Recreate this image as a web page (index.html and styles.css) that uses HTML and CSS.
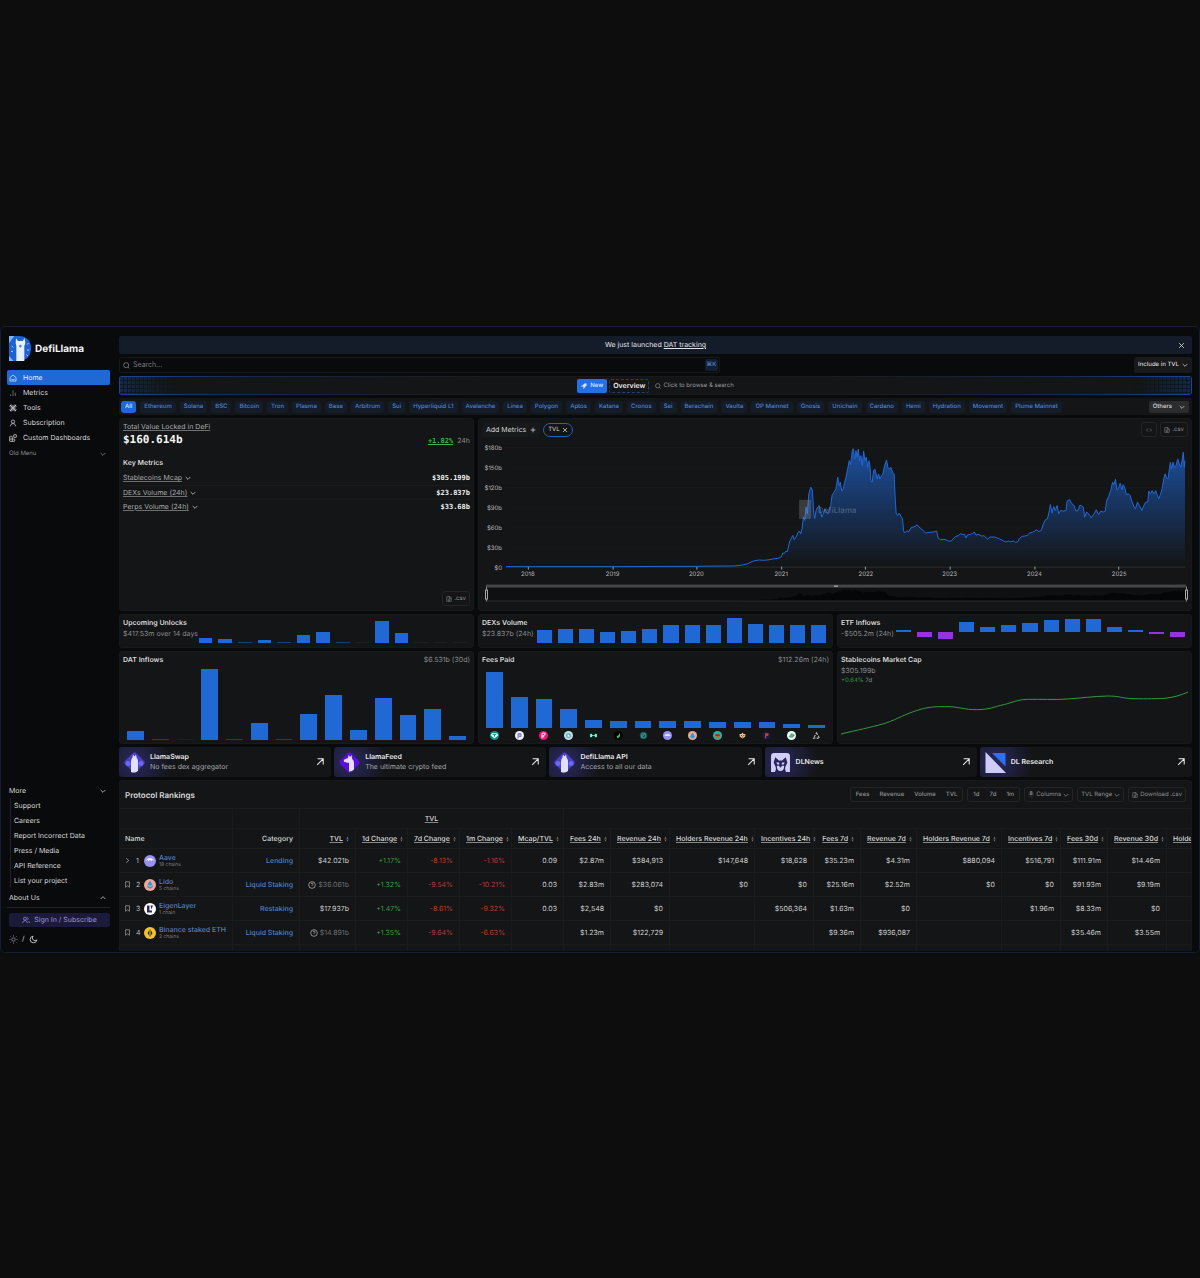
FILE: index.html
```html
<!DOCTYPE html>
<html lang="en">
<head>
<meta charset="utf-8">
<title>DefiLlama</title>
<meta name="viewport" content="width=device-width, initial-scale=1">
<link rel="stylesheet" href="styles.css">
</head>
<body>
<svg class="sprite" aria-hidden="true">
  <symbol id="chev-down" viewBox="3 3 18 18"><path d="m5 9 7 7 7-7"/></symbol>
  <symbol id="chev-up" viewBox="3 3 18 18"><path d="m5 15 7-7 7 7"/></symbol>
  <symbol id="chev-right" viewBox="4 2 16 20"><path d="m8 5 8 7-8 7"/></symbol>
  <symbol id="home" viewBox="0 0 24 24"><path d="M3 10.500 12 3l9 7.500V21H3z"/><path d="M7 15.500q5 4 10 0M8 11h.1M16 11h.1"/></symbol>
  <symbol id="bars" viewBox="0 0 24 24"><path d="M5 21v-5M12 21V4M19 21V11"/></symbol>
  <symbol id="tools" viewBox="1 1 22 22"><path d="m4 4 16 16M20 4 4 20M3 7l4-4 4 4-4 4zM13 7l4-4 4 4-4 4zM3 17l4-4 4 4-4 4zM13 17l4-4 4 4-4 4z"/></symbol>
  <symbol id="user" viewBox="0 0 24 24"><circle cx="12" cy="8" r="5"/><path d="M4 22c0-5 3-8 8-8s8 3 8 8"/></symbol>
  <symbol id="users" viewBox="0 0 24 24"><circle cx="9" cy="8" r="4.500"/><path d="M2 21c0-4 3-7 7-7s7 3 7 7M16 4a4.500 4.500 0 0 1 0 8M19 15c2 1 3 3 3 6"/></symbol>
  <symbol id="blocks" viewBox="0 0 24 24"><rect x="14" y="2" width="8" height="8" rx="1"/><path d="M10 22V9a2 2 0 0 0-2-2H3a1 1 0 0 0-1 1v13a1 1 0 0 0 1 1h13a1 1 0 0 0 1-1v-5a1 1 0 0 0-1-1H2"/></symbol>
  <symbol id="search" viewBox="1 1 22 22"><circle cx="11" cy="11" r="8"/><path d="m21 21-4-4"/></symbol>
  <symbol id="close" viewBox="3 3 18 18"><path d="M18 6 6 18M6 6l12 12"/></symbol>
  <symbol id="plus" viewBox="3 3 18 18"><path d="M5 12h14M12 5v14"/></symbol>
  <symbol id="code" viewBox="0 0 24 24"><path d="m16 18 6-6-6-6M8 6l-6 6 6 6"/></symbol>
  <symbol id="file" viewBox="1 1 22 22"><path d="M14 2H6a2 2 0 0 0-2 2v16a2 2 0 0 0 2 2h12a2 2 0 0 0 2-2V8zM13 2v7h7M8 13h8M8 18h8"/></symbol>
  <symbol id="arrow" viewBox="2 2 20 20"><path d="M5 19 20 4M6 4h14v14"/></symbol>
  <symbol id="sun" viewBox="0 0 24 24"><circle cx="12" cy="12" r="4.500"/><path d="M12 1v3M12 20v3M1 12h3M20 12h3M4 4l2 2M18 18l2 2M4 20l2-2M18 6l2-2"/></symbol>
  <symbol id="moon" viewBox="0 0 24 24"><path d="M11 3a7 7 0 0 0 10 10A9 9 0 1 1 11 3z"/></symbol>
  <symbol id="bookmark" viewBox="3 0 18 24"><path d="M5 2h14v20l-7-5-7 5z"/></symbol>
  <symbol id="help" viewBox="0 0 24 24"><circle cx="12" cy="12" r="10"/><path d="M9 9a3 3 0 1 1 4 3q-1 .5-1 2M12 17.500v.1"/></symbol>
  <symbol id="sort" viewBox="0 0 8 16"><path class="up" d="M4 1 7 7H1z"/><path class="down" d="M1 9h6l-3 6z"/></symbol>
  <symbol id="rocket" viewBox="0 0 24 24"><path d="M14 3h7v7l-8 8-7-7zM6 10l-4 3 3 1M13 18l-2 4-2-3M8 13l4 4" fill="currentColor"/></symbol>
  <symbol id="swap" viewBox="0 0 42 42">
    <path d="M18 2q3-3 6 0l16 16q3 3 0 6L24 40q-3 3-6 0L2 24q-3-3 0-6z" fill="#4b40c4"/><circle cx="8" cy="23" r="5" fill="#6c68f0"/><circle cx="34" cy="23" r="5" fill="#6c68f0"/>
    <path d="M14 40V20q0-7 3-9l1-6 3 4 3-4 1 6q3 3 3 10v17q-7 5-14 2z" fill="#e2e0ff"/>
  </symbol>
  <symbol id="feed" viewBox="0 0 42 42">
    <path d="M18 2q3-3 6 0l16 16q3 3 0 6L24 40q-3 3-6 0L2 24q-3-3 0-6z" fill="#5a10d8"/><path d="M20 39V22l-9-2q-3-3 0-5l7-3 1-6 3 4 3-4 1 7q4 4 4 10v12q-5 5-10 4z" fill="#e8ddff"/>
  </symbol>
  <symbol id="dlnews" viewBox="0 0 40 40">
    <path d="M2 38V8q0-6 6-6h24q6 0 6 6v30h-7q-3-3-2-9l4-9-3-10-7 6h-6l-7-6-3 10 4 9q1 6-2 9z" fill="#d2cefa"/><path d="M12 20h5l1 4h-4zM28 20h-5l-1 4h4zM13 26h4l3 4 3-4h4q0 10-7 10t-7-10z" fill="#d2cefa"/>
  </symbol>
  <symbol id="dlresearch" viewBox="0 0 42 42"><path d="M1 0v42h41z" fill="#cfcdf8"/><path d="M14 2h27v27z" fill="#2f6ff0"/></symbol>
</svg>

<div class="app">
  <aside class="sidebar">
    <a class="brand" href="#">
      <svg viewBox="0 0 66 75" aria-hidden="true">
        <path d="M0 0h30q36 2 36 37T30 75H0z" fill="#1c62d2"/>
        <path d="M0 0h16L0 22zM0 60l14 15H0z" fill="#7db2f2"/>
        <path d="M22 75V30l-2-8 1-15 6 8h14l6-9 2 16-3 8v45z" fill="#e6effb"/>
        <path d="m29 30 5-4 5 4-5 5z" fill="#4d7ec4"/><path d="m8 30 5 4M6 46h6M54 26l5-5M54 42h7M52 56l5 4" stroke="#a9cdf8" stroke-width="3"/>
      </svg>
      <span>DefiLlama</span>
    </a>
    <nav class="nav">
      <a class="active" href="#"><svg><use href="#home"/></svg>Home</a>
      <a href="#"><svg class="dim"><use href="#bars"/></svg>Metrics</a>
      <a href="#"><svg><use href="#tools"/></svg>Tools</a>
      <a href="#"><svg><use href="#user"/></svg>Subscription</a>
      <a href="#"><svg><use href="#blocks"/></svg>Custom Dashboards</a>
    </nav>
    <button class="fold old">Old Menu<svg><use href="#chev-down"/></svg></button>
    <div class="side-end">
      <button class="fold">More<svg><use href="#chev-down"/></svg></button>
      <nav class="subnav">
        <a href="#">Support</a><a href="#">Careers</a><a href="#">Report Incorrect Data</a>
        <a href="#">Press / Media</a><a href="#">API Reference</a><a href="#">List your project</a>
      </nav>
      <button class="fold about">About Us<svg><use href="#chev-up"/></svg></button>
      <hr>
      <a class="signin" href="#"><svg><use href="#users"/></svg>Sign In / Subscribe</a>
      <button class="theme" aria-label="Switch theme"><svg class="dim"><use href="#sun"/></svg>/<svg><use href="#moon"/></svg></button>
    </div>
  </aside>

  <main class="main">
    <div class="notice"><p>We just launched <a href="#">DAT tracking</a></p><button aria-label="Close"><svg><use href="#close"/></svg></button></div>

    <div class="search-row">
      <label class="search"><svg><use href="#search"/></svg><input type="search" placeholder="Search..." aria-label="Search"><kbd>⌘K</kbd></label>
      <button class="include">Include in TVL<svg><use href="#chev-down"/></svg></button>
    </div>

    <div class="promo">
      <button class="new"><svg><use href="#rocket"/></svg>New</button>
      <button class="overview">Overview</button>
      <button class="browse"><svg><use href="#search"/></svg>Click to browse &amp; search</button>
    </div>

    <div class="chains">
      <nav>
        <a class="active" href="#">All</a><a href="#">Ethereum</a><a href="#">Solana</a><a href="#">BSC</a><a href="#">Bitcoin</a><a href="#">Tron</a><a href="#">Plasma</a><a href="#">Base</a><a href="#">Arbitrum</a><a href="#">Sui</a><a href="#">Hyperliquid L1</a><a href="#">Avalanche</a><a href="#">Linea</a><a href="#">Polygon</a><a href="#">Aptos</a><a href="#">Katana</a><a href="#">Cronos</a><a href="#">Sei</a><a href="#">Berachain</a><a href="#">Vaulta</a><a href="#">OP Mainnet</a><a href="#">Gnosis</a><a href="#">Unichain</a><a href="#">Cardano</a><a href="#">Hemi</a><a href="#">Hydration</a><a href="#">Movement</a><a href="#">Plume Mainnet</a>
      </nav>
      <button>Others<svg><use href="#chev-down"/></svg></button>
    </div>

    <div class="cards">
      <section class="card overview-card">
        <a class="under" href="#">Total Value Locked in DeFi</a>
        <div class="tvl"><strong>$160.614b</strong><span><b>+1.82%</b>24h</span></div>
        <h2>Key Metrics</h2>
        <dl>
          <div><dt><a class="under" href="#">Stablecoins Mcap</a><svg><use href="#chev-down"/></svg></dt><dd>$305.199b</dd></div>
          <div><dt><a class="under" href="#">DEXs Volume (24h)</a><svg><use href="#chev-down"/></svg></dt><dd>$23.837b</dd></div>
          <div><dt><a class="under" href="#">Perps Volume (24h)</a><svg><use href="#chev-down"/></svg></dt><dd>$33.68b</dd></div>
        </dl>
        <button class="outline csv"><svg><use href="#file"/></svg>.csv</button>
      </section>

      <section class="card chart-card">
        <div class="toolbar">
          <button class="add">Add Metrics<svg><use href="#plus"/></svg></button>
          <button class="pill">TVL<svg><use href="#close"/></svg></button>
          <button class="outline code" aria-label="Embed"><svg><use href="#code"/></svg></button>
          <button class="outline"><svg><use href="#file"/></svg>.csv</button>
        </div>
        <svg class="chart" viewBox="0 0 714 172" role="img" aria-label="Total value locked">
          <defs><linearGradient id="fade" x1="0" y1="0" x2="0" y2="1"><stop offset="0" stop-color="#2068d8" stop-opacity=".7"/><stop offset="1" stop-color="#2068d8" stop-opacity="0"/></linearGradient></defs>
          <path class="grid" d="M27 10.500h681M27 30.500h681M27 50.500h681M27 70.500h681M27 90.500h681M27 110.500h681"/>
          <path class="axis" d="M27 130.500h681"/>
          <path class="tick" d="M49.500 130v3M134.500 130v3M218.500 130v3M303.500 130v3M387.500 130v3M472.500 130v3M557.500 130v3M641.500 130v3"/>
          <path id="tvl-area" fill="url(#fade)"/>
          <path id="tvl-line" class="line"/>
          <g class="mark"><rect x="321" y="63" width="12" height="19"/><path d="M325 82V70l-1-4 3 2 3-2 1 5v11z"/><text x="340" y="76">DefiLlama</text></g>
          <g class="ylab"><text x="23" y="13">$180b</text><text x="23" y="33">$150b</text><text x="23" y="53">$120b</text><text x="23" y="73">$90b</text><text x="23" y="93">$60b</text><text x="23" y="113">$30b</text><text x="23" y="133">$0</text></g>
          <g class="xlab"><text x="49" y="139">2018</text><text x="134" y="139">2019</text><text x="218" y="139">2020</text><text x="303" y="139">2021</text><text x="388" y="139">2022</text><text x="472" y="139">2023</text><text x="557" y="139">2024</text><text x="642" y="139">2025</text></g>
          <rect x="7" y="150" width="702" height="14" fill="#0e1012"/>
          <path id="tvl-mini" fill="#050607"/>
          <rect x="7" y="148" width="702" height="3" fill="#444648"/><path d="M7 164.500h702" stroke="#292b2d"/>
          <path d="M356 149.500h4" stroke="#c8c8c8"/>
          <path d="M7.500 150v15M709.500 150v15" stroke="#888"/>
          <rect x="6.500" y="153.500" width="2" height="9" fill="#111" stroke="#aaa"/><rect x="708.500" y="153.500" width="2" height="9" fill="#111" stroke="#aaa"/>
        </svg>
      </section>

      <section class="card mini">
        <div><h2>Upcoming Unlocks</h2><p>$417.53m over 14 days</p></div>
        <div class="bars short"><i style="height:19%"></i><i style="height:16%"></i><i class="faint" style="height:4%"></i><i style="height:13%"></i><i class="faint" style="height:4%"></i><i style="height:32%"></i><i style="height:43%"></i><i class="faint" style="height:4%"></i><i class="fainter" style="height:4%"></i><i style="height:90%"></i><i style="height:42%"></i><i class="fainter" style="height:4%"></i><i class="fainter" style="height:4%"></i><i class="fainter" style="height:4%"></i></div>
      </section>
      <section class="card mini mini-b">
        <div><h2>DEXs Volume</h2><p>$23.837b (24h)</p></div>
        <div class="bars short"><i style="height:52%"></i><i style="height:55%"></i><i style="height:58%"></i><i style="height:43%"></i><i style="height:50%"></i><i style="height:57%"></i><i style="height:74%"></i><i style="height:74%"></i><i style="height:71%"></i><i style="height:99%"></i><i style="height:75%"></i><i style="height:71%"></i><i style="height:71%"></i><i style="height:71%"></i></div>
      </section>
      <section class="card mini mini-b">
        <div><h2>ETF Inflows</h2><p>-$505.2m (24h)</p></div>
        <div class="bars short split"><i style="height:7%"></i><i class="neg" style="height:20%"></i><i class="neg" style="height:27%"></i><i style="height:42%"></i><i style="height:22%"></i><i style="height:29%"></i><i style="height:35%"></i><i style="height:47%"></i><i style="height:54%"></i><i style="height:51%"></i><i style="height:20%"></i><i style="height:7%"></i><i class="neg" style="height:7%"></i><i class="neg" style="height:20%"></i></div>
      </section>

      <section class="card tall">
        <header><h2>DAT Inflows</h2><p>$6.531b (30d)</p></header>
        <div class="bars"><i style="height:13%"></i><i class="faint" style="height:1%"></i><i class="fainter" style="height:1%"></i><i style="height:99%"></i><i class="faint" style="height:1%"></i><i style="height:24%"></i><i class="faint" style="height:1%"></i><i style="height:36%"></i><i style="height:63%"></i><i style="height:14%"></i><i style="height:58%"></i><i style="height:35%"></i><i style="height:43%"></i><i style="height:5%"></i></div>
      </section>
      <section class="card tall fees">
        <header><h2>Fees Paid</h2><p>$112.26m (24h)</p></header>
        <div class="bars"><i style="height:98%"></i><i style="height:55%"></i><i style="height:51%"></i><i style="height:33%"></i><i style="height:14%"></i><i style="height:13%"></i><i style="height:13%"></i><i style="height:13%"></i><i style="height:12%"></i><i style="height:11%"></i><i style="height:10%"></i><i style="height:10%"></i><i style="height:7%"></i><i style="height:6%"></i></div>
        <div class="coins">
          <svg viewBox="0 0 24 24"><circle cx="12" cy="12" r="12" fill="#0e9384"/><path d="M5 6h14l3 5-10 9L2 11z" fill="#e9fffb"/><path d="M7 9h10M12 9v6" stroke="#0e9384" stroke-width="2.500"/></svg>
          <svg viewBox="0 0 24 24"><circle cx="12" cy="12" r="12" fill="#f0effa"/><path d="M8 20V7h8v8h-5" fill="#aaa6e6" stroke="#6661bb" stroke-width="2"/></svg>
          <svg viewBox="0 0 24 24"><circle cx="12" cy="12" r="12" fill="#ee1470"/><path d="M8 20V9q0-4 4-4 5 0 4 4l-6 5 4 3" fill="none" stroke="#ffd4e8" stroke-width="3"/></svg>
          <svg viewBox="0 0 24 24"><circle cx="12" cy="12" r="12" fill="#b9e6dd"/><circle cx="12" cy="12" r="7" fill="#79a9cf"/><path d="M9 15c0-8 6-8 6 0z" fill="#f5f0fa"/></svg>
          <svg viewBox="0 0 24 24"><circle cx="12" cy="12" r="12" fill="#06201b"/><path d="M3 8q5-2 6 3h6q1-5 6-3v8q-5 2-6-3H9q-1 5-6 3z" fill="#8cf0d4"/></svg>
          <svg viewBox="0 0 24 24"><circle cx="12" cy="12" r="12" fill="#000"/><path d="m10 20-3-6 4-2 5-7v9z" fill="#30c47c"/></svg>
          <svg viewBox="0 0 24 24"><circle cx="12" cy="12" r="10" fill="#165056"/><circle cx="12" cy="12" r="6" fill="none" stroke="#2a8c8c" stroke-width="3"/><path d="m7 15 9-8" stroke="#d49b46" stroke-width="2"/></svg>
          <svg viewBox="0 0 24 24"><circle cx="12" cy="12" r="12" fill="#9690ee"/><path d="M4 13c1-8 15-8 16 0z" fill="#e1dfff"/></svg>
          <svg viewBox="0 0 24 24"><circle cx="12" cy="12" r="12" fill="#f1a693"/><path d="m12 3 6 11a6 6 0 1 1-12 0z" fill="#1ea1d6"/></svg>
          <svg viewBox="0 0 24 24"><circle cx="12" cy="12" r="12" fill="#1eb5b2"/><circle cx="12" cy="13" r="7" fill="#b96a35"/><path d="M6 11h12" stroke="#5c2e1c" stroke-width="3"/></svg>
          <svg viewBox="0 0 24 24"><path d="M4 8h5l3-4 3 4h5l-1 7-7 5-7-5z" fill="#eec487"/><path d="M8 12h3M14 12h3M10 16h4" stroke="#3a2812" stroke-width="2"/></svg>
          <svg viewBox="0 0 24 24"><circle cx="12" cy="12" r="11" fill="#141c40"/><path d="M8 20V6q11-2 10 4-1 4-7 4v6z" fill="#bd3c34"/></svg>
          <svg viewBox="0 0 24 24"><circle cx="12" cy="12" r="12" fill="#f0faf5"/><path d="m4 16 8-11 7 4-8 9z" fill="#48b886"/><path d="M13 18l7-8" stroke="#1c2a25" stroke-width="2"/></svg>
          <svg viewBox="0 0 24 24"><path d="m12 5 8 14H4z" fill="none" stroke="#b8b8b8" stroke-width="3" stroke-dasharray="6 3"/></svg>
        </div>
      </section>
      <section class="card tall stable">
        <h2>Stablecoins Market Cap</h2><p>$305.199b</p><small><b>+0.64%</b> 7d</small>
        <svg class="spark" viewBox="0 0 1042 150" preserveAspectRatio="none" aria-hidden="true"><path d="M0 132C50 120 90 112 125 102S180 78 220 64 280 50 310 50C350 48 370 60 410 59S460 50 480 46C510 40 530 28 560 28C600 27 640 30 680 27S760 19 800 18C840 18 840 25 880 26C920 27 950 26 970 25C1000 22 1020 16 1042 6"/></svg>
      </section>
    </div>

    <div class="links">
      <a href="#"><svg><use href="#swap"/></svg><span><b>LlamaSwap</b>No fees dex aggregator</span><svg class="go"><use href="#arrow"/></svg></a>
      <a href="#"><svg><use href="#feed"/></svg><span><b>LlamaFeed</b>The ultimate crypto feed</span><svg class="go"><use href="#arrow"/></svg></a>
      <a href="#"><svg><use href="#swap"/></svg><span><b>DefiLlama API</b>Access to all our data</span><svg class="go"><use href="#arrow"/></svg></a>
      <a href="#"><svg><use href="#dlnews"/></svg><span><b>DLNews</b></span><svg class="go"><use href="#arrow"/></svg></a>
      <a href="#"><svg><use href="#dlresearch"/></svg><span><b>DL Research</b></span><svg class="go"><use href="#arrow"/></svg></a>
    </div>

    <section class="rankings">
      <header>
        <h1>Protocol Rankings</h1>
        <div class="group"><button>Fees</button><button>Revenue</button><button>Volume</button><button>TVL</button></div>
        <div class="group"><button>1d</button><button>7d</button><button>1m</button></div>
        <button class="outline"><em>8</em>Columns<svg><use href="#chev-down"/></svg></button>
        <button class="outline">TVL Range<svg><use href="#chev-down"/></svg></button>
        <button class="outline download"><svg><use href="#file"/></svg>Download .csv</button>
      </header>
      <div class="scroller">
        <table>
          <colgroup><col class="w113"><col class="w67"><col class="w56"><col class="w52"><col class="w52"><col class="w52"><col class="w52"><col class="w47"><col class="w59"><col class="w85"><col class="w59"><col class="w47"><col class="w56"><col class="w85"><col class="w59"><col class="w47"><col class="w59"><col class="w85"></colgroup>
          <thead>
            <tr class="groups"><th></th><th></th><th colspan="5"><u>TVL</u></th><th colspan="11"></th></tr>
            <tr><th>Name</th><th>Category</th><th><u>TVL</u><svg class="sorted"><use href="#sort"/></svg></th><th><u>1d Change</u><svg><use href="#sort"/></svg></th><th><u>7d Change</u><svg><use href="#sort"/></svg></th><th><u>1m Change</u><svg><use href="#sort"/></svg></th><th><u>Mcap/TVL</u><svg><use href="#sort"/></svg></th><th><u>Fees 24h</u><svg><use href="#sort"/></svg></th><th><u>Revenue 24h</u><svg><use href="#sort"/></svg></th><th><u>Holders Revenue 24h</u><svg><use href="#sort"/></svg></th><th><u>Incentives 24h</u><svg><use href="#sort"/></svg></th><th><u>Fees 7d</u><svg><use href="#sort"/></svg></th><th><u>Revenue 7d</u><svg><use href="#sort"/></svg></th><th><u>Holders Revenue 7d</u><svg><use href="#sort"/></svg></th><th><u>Incentives 7d</u><svg><use href="#sort"/></svg></th><th><u>Fees 30d</u><svg><use href="#sort"/></svg></th><th><u>Revenue 30d</u><svg><use href="#sort"/></svg></th><th><u>Holders Revenue 30d</u><svg><use href="#sort"/></svg></th></tr>
          </thead>
          <tbody>
            <tr><td><div class="name"><svg class="lead"><use href="#chev-right"/></svg><span>1</span><svg class="coin" viewBox="0 0 24 24"><circle cx="12" cy="12" r="12" fill="#9690f2"/><path d="M4 12c2-8 14-8 16 0l-3-2-2 2-3-2-3 2-2-2z" fill="#f0efff"/></svg><p><a href="#">Aave</a><small>18 chains</small></p></div></td><td><a href="#">Lending</a></td><td>$42.021b</td><td class="up">+1.17%</td><td class="down">-8.13%</td><td class="down">-1.16%</td><td>0.09</td><td>$2.87m</td><td>$384,913</td><td>$147,648</td><td>$18,628</td><td>$35.23m</td><td>$4.31m</td><td>$880,094</td><td>$516,791</td><td>$111.91m</td><td>$14.46m</td><td></td></tr>
            <tr><td><div class="name"><svg class="lead"><use href="#bookmark"/></svg><span>2</span><svg class="coin" viewBox="0 0 24 24"><circle cx="12" cy="12" r="12" fill="#f3a698"/><path d="M12 3 17 11l-5 3-5-3zM6 13l6 3 6-3a6 6 0 1 1-12 0z" fill="#279bd4"/></svg><p><a href="#">Lido</a><small>5 chains</small></p></div></td><td><a href="#">Liquid Staking</a></td><td class="muted"><svg class="help"><use href="#help"/></svg>$36.061b</td><td class="up">+1.32%</td><td class="down">-9.54%</td><td class="down">-10.21%</td><td>0.03</td><td>$2.83m</td><td>$283,074</td><td>$0</td><td>$0</td><td>$25.16m</td><td>$2.52m</td><td>$0</td><td>$0</td><td>$91.93m</td><td>$9.19m</td><td></td></tr>
            <tr><td><div class="name"><svg class="lead"><use href="#bookmark"/></svg><span>3</span><svg class="coin" viewBox="0 0 24 24"><circle cx="12" cy="12" r="12" fill="#fff"/><path d="M6 5h5v10h5v4H6zM13 5h5l-3 8z" fill="#32246e"/></svg><p><a href="#">EigenLayer</a><small>1 chain</small></p></div></td><td><a href="#">Restaking</a></td><td>$17.937b</td><td class="up">+1.47%</td><td class="down">-8.61%</td><td class="down">-9.32%</td><td>0.03</td><td>$2,548</td><td>$0</td><td></td><td>$506,364</td><td>$1.63m</td><td>$0</td><td></td><td>$1.96m</td><td>$8.33m</td><td>$0</td><td></td></tr>
            <tr><td><div class="name"><svg class="lead"><use href="#bookmark"/></svg><span>4</span><svg class="coin" viewBox="0 0 24 24"><circle cx="12" cy="12" r="12" fill="#f3c32d"/><path d="m12 4 5 8-5 8-5-8z" fill="#3b310f"/><path d="M12 4v16" stroke="#e2b938"/></svg><p><a href="#">Binance staked ETH</a><small>2 chains</small></p></div></td><td><a href="#">Liquid Staking</a></td><td class="muted"><svg class="help"><use href="#help"/></svg>$14.891b</td><td class="up">+1.35%</td><td class="down">-9.64%</td><td class="down">-6.63%</td><td></td><td>$1.23m</td><td>$122,729</td><td></td><td></td><td>$9.36m</td><td>$936,087</td><td></td><td></td><td>$35.46m</td><td>$3.55m</td><td></td></tr>
            <tr><td><div class="name"><svg class="lead"><use href="#chev-right"/></svg><span>5</span><svg class="coin" viewBox="0 0 24 24"><circle cx="12" cy="12" r="11" fill="#777"/></svg><p><a href="#">Ethena</a><small>1 chain</small></p></div></td><td></td><td></td><td></td><td></td><td></td><td></td><td></td><td></td><td></td><td></td><td></td><td></td><td></td><td></td><td></td><td></td><td></td></tr>
          </tbody>
        </table>
      </div>
    </section>
  </main>
</div>
<script src="chart.js"></script>
</body>
</html>
```
FILE: styles.css
```css
:root {
  --bg: #090a0c;
  --card: #131516;
  --text: #d8d8d8;
  --muted: #8a8c8e;
  --link: #4c84cf;
  --blue: #2068d4;
}
* { box-sizing: border-box; margin: 0; padding: 0; }
body {
  min-height: 100vh;
  padding-top: 1px;
  display: flex;
  align-items: center;
  background: #0d0d0d;
  color: var(--text);
  font: 7px/10px Inter, "Liberation Sans", sans-serif;
  text-rendering: geometricPrecision;
}
a { color: inherit; text-decoration: none; }
button { font: inherit; color: inherit; background: none; border: 0; display: flex; align-items: center; white-space: nowrap; text-rendering: inherit; }
svg { width: 7px; height: 7px; flex: none; fill: none; stroke: currentColor; stroke-width: 2.2; display: block; }
.coin, .coins svg, .brand svg, .links svg:not(.go) { stroke: none; }
svg.dim { color: #85878a; }
h1, h2 { font-size: 7px; font-weight: 600; line-height: 10px; }
.sprite { position: absolute; width: 0; height: 0; }
.under { text-decoration: underline; text-decoration-color: #6d6f71; color: #a9abad; text-underline-offset: 1px; }

.app {
  flex: 1;
  min-width: 0;
  display: flex;
  background: var(--bg);
  border: 1px solid #161c36;
  border-radius: 5px;
  overflow: hidden;
}

/* Sidebar */
.sidebar { flex: 0 0 118px; display: flex; flex-direction: column; padding: 9px 9px 5px 6px; }
.brand { display: flex; align-items: center; gap: 4px; padding-left: 2px; margin-bottom: 9px; font-size: 10px; font-weight: 700; color: #f2f2f2; }
.brand svg { width: 22px; height: 25px; }
.nav a { display: flex; align-items: center; gap: 6px; height: 15px; padding-left: 2px; border-radius: 2px; }
.nav svg { width: 8px; height: 8px; }
.nav .active { background: var(--blue); color: #e4eeff; }
.fold { width: 100%; height: 15px; justify-content: space-between; padding: 0 4px 0 2px; }
.fold svg { width: 6px; height: 6px; }
.old { font-size: 6px; color: var(--muted); margin-top: 1px; }
.side-end { margin-top: auto; }
.subnav { margin-left: 3px; border-left: 1px solid #202224; padding-left: 3px; }
.subnav a { display: flex; align-items: center; height: 15px; }
.about { margin-top: 2px; }
.sidebar hr { border: 0; border-top: 1px solid #202224; margin: 2px 0 5px; }
.signin { display: flex; align-items: center; justify-content: center; gap: 4px; height: 14px; margin: 0 0 4px 2px; border-radius: 2px; background: #1b1a39; color: #a092e8; }
.signin svg { width: 8px; height: 8px; }
.theme { height: 16px; gap: 4px; padding-left: 2px; }
.theme svg { width: 9px; height: 9px; }

/* Main column */
.main { flex: 1; min-width: 0; display: flex; flex-direction: column; gap: 3px; padding: 9px 7px 1px 0; }
.notice { display: flex; align-items: center; height: 18px; padding: 0 7px 0 14px; border-radius: 2px; background: #151c29; }
.notice p { flex: 1; text-align: center; color: #e2e4e8; }
.notice a { text-decoration: underline; }
.search-row { display: flex; justify-content: space-between; height: 16px; }
.search { display: flex; align-items: center; gap: 3px; width: 56%; padding: 0 1px 0 3px; border: 1px solid #151719; border-radius: 2px; color: var(--muted); }
.search input { flex: 1; border: 0; background: none; color: inherit; font: inherit; outline: 0; }
.search input::placeholder { color: #77797b; }
.search kbd { font: 500 6px/12px Inter, "DejaVu Sans", sans-serif; width: 13px; text-align: center; border-radius: 2px; background: #141e2f; color: var(--link); }
.include { gap: 3px; padding: 0 4px; font-size: 6px; font-weight: 500; border-radius: 2px; background: #17191a; }
.include svg, .chains svg { width: 6px; height: 6px; }

.promo {
  position: relative;
  display: flex;
  align-items: center;
  justify-content: center;
  gap: 2px;
  height: 19px;
  border: 1px solid transparent;
  border-radius: 3px;
  background: linear-gradient(var(--card), var(--card)) padding-box, linear-gradient(90deg, #1b468c, #142a4e 12%, #17191c 34%, #17191c 66%, #142a4e 88%, #1b468c) border-box;
}
.promo::before, .promo::after {
  content: "";
  position: absolute;
  inset: 0 auto 0 0;
  width: 56px;
  background: repeating-linear-gradient(90deg, #10182500 0 3px, #101825 3px 4px), repeating-linear-gradient(#10182500 0 3px, #101825 3px 4px), #14294b;
  mask-image: linear-gradient(90deg, #000, transparent);
}
.promo::after { inset: 0 0 0 auto; mask-image: linear-gradient(270deg, #000, transparent); }
.promo button { height: 14px; padding: 0 4px; border-radius: 2px; gap: 3px; }
.promo svg { width: 6px; height: 6px; }
.promo .new { background: #2470e6; color: #dbe8ff; font-size: 6px; font-weight: 500; }
.promo .overview { padding: 0 3px; border: 1px dashed #1c4078; font-weight: 600; color: #eee; }
.promo .browse { padding-right: 0; color: #999b9d; font-size: 6px; gap: 2px; }

.chains { display: flex; align-items: center; justify-content: space-between; height: 17px; padding: 0 3px 0 2px; border-radius: 2px; background: var(--card); font-size: 6px; font-weight: 500; }
.chains nav { display: flex; gap: 4px; overflow: hidden; }
.chains a { height: 12px; padding: 0 4px; line-height: 12px; border-radius: 3px; background: #141c29; color: var(--link); white-space: nowrap; }
.chains .active { background: var(--blue); color: #dce9ff; }
.chains button { gap: 7px; height: 12px; padding: 0 4px; border-radius: 2px; background: #2b2c2e; }

.cards { display: grid; grid-template-columns: repeat(3, minmax(0, 1fr)); gap: 3px 4px; }
.card { background: var(--card); border: 1px solid #16181a; border-radius: 3px; }
.card p { color: var(--muted); white-space: nowrap; }
.overview-card { display: flex; flex-direction: column; padding: 3px; min-height: 193px; }
.overview-card > .under { align-self: flex-start; }
.tvl { display: flex; align-items: center; justify-content: space-between; margin-bottom: 11px; }
.tvl strong { font: 700 11px/15px "DejaVu Sans Mono", monospace; color: #f4f4f4; }
.tvl span { color: var(--muted); padding-top: 3px; }
.tvl b { font: 700 7px/10px "DejaVu Sans Mono", monospace; color: #3bb54a; text-decoration: underline; margin-right: 4px; }
dl { margin-top: 3px; }
dl div { display: flex; align-items: center; justify-content: space-between; height: 14px; }
dl div + div { border-top: 1px solid #191b1d; }
dt { display: flex; align-items: center; gap: 3px; }
dt svg { width: 6px; height: 6px; }
dd { font: 700 7px/10px "DejaVu Sans Mono", monospace; color: #eee; }
.outline { height: 15px; gap: 2px; padding: 0 3px; border: 1px solid #222426; border-radius: 3px; font-size: 6px; color: #8f9193; }
.outline svg { width: 6px; height: 6px; }
.csv { margin: auto 0 1px auto; }

.chart-card { grid-column: span 2; }
.toolbar { display: flex; align-items: center; gap: 3px; padding: 3px 3px 0; }
.add { height: 14px; gap: 4px; padding: 0 4px; border-radius: 2px; background: #171a1b; }
.add svg, .pill svg { width: 6px; height: 6px; }
.pill { height: 14px; gap: 2px; padding: 0 4px; border: 1px solid #2460bd; border-radius: 7px; font-size: 6px; }
.toolbar .code { margin-left: auto; padding: 0 4px; }
.chart { width: 100%; height: auto; }
.chart text { font-size: 6px; fill: #b8babc; stroke: none; }
.chart path, .chart rect { stroke-width: 1; }
.chart #tvl-area, .chart #tvl-mini { stroke: none; }
.chart rect:not([stroke]) { stroke: none; }
.grid { stroke: #17191b; }
.axis { stroke: #2b2d2f; }
.tick { stroke: #999; }
.line { stroke: #2068d8; stroke-linejoin: round; }
.ylab { text-anchor: end; }
.xlab { text-anchor: middle; }
.mark { opacity: .26; fill: #aaa; stroke: none; }
.chart .mark text { font-size: 8px; font-weight: 600; fill: #bcd; }

.mini { display: flex; justify-content: space-between; align-items: flex-start; padding: 3px; min-height: 34px; }
.mini > div:first-child { width: 0; }
.mini h2 { margin-bottom: 1px; white-space: nowrap; }
.bars { display: flex; align-items: flex-end; height: 72px; }
.bars i { flex: 1; margin: 0 4px; background: var(--blue); min-height: 1px; }
.bars .faint { background: #183e73; }
.bars .fainter { background: #1a2026; }
.short { flex: 0 0 79%; height: 25px; }
.short i { margin: 0 3px; }
.mini-b .short { flex-basis: 85%; }
.split { align-items: stretch; }
.split i { margin-top: auto; margin-bottom: 11px; }
.split .neg { background: #9333e4; margin-top: 14px; margin-bottom: auto; }
.tall { padding: 3px; min-height: 93px; }
.tall header { display: flex; justify-content: space-between; margin-bottom: 3px; }
.fees .bars { height: 57px; margin-bottom: 3px; }
.fees header { margin-bottom: 6px; }
.coins { display: flex; justify-content: space-around; }
.coins svg { width: 9px; height: 9px; }
.stable { display: flex; flex-direction: column; }
.stable p { margin-top: 1px; }
.stable small { font-size: 6px; line-height: 9px; color: var(--muted); }
.stable small b { font-weight: 400; color: #3a9c47; }
.spark { width: 100%; height: 50px; margin-top: 5px; }
.spark path { stroke: #339a40; stroke-width: 1; vector-effect: non-scaling-stroke; }

.links { display: grid; grid-template-columns: repeat(5, minmax(0, 1fr)); gap: 3px; }
.links a { display: flex; align-items: center; gap: 5px; height: 30px; padding: 0 7px 0 5px; border-radius: 3px; background: radial-gradient(circle at 15px 15px, #2a2960, #131516 38px); color: #a3a5a7; }
.links b { display: block; color: #eaeaea; font-weight: 600; }
.links svg { width: 21px; height: 21px; }
.links .go { width: 8px; height: 8px; margin-left: auto; color: #ececec; stroke-width: 2.6; }

/* Rankings */
.rankings { background: var(--card); border-radius: 3px 3px 0 0; border: 1px solid #16181a; border-bottom: 0; overflow: hidden; }
.rankings header { display: flex; align-items: center; gap: 4px; height: 27px; padding: 0 5px; }
.rankings h1 { font-size: 8px; margin-right: auto; }
.group { display: flex; height: 15px; border: 1px solid #222426; border-radius: 3px; }
.group button { padding: 0 5px; font-size: 6px; font-weight: 500; color: #8f9193; }
.rankings em { font: 600 5px/7px Inter, sans-serif; width: 6px; text-align: center; background: #202224; border-radius: 4px; }
.scroller { max-height: 143px; overflow: hidden; }
table { table-layout: fixed; width: 1132px; border-spacing: 0; }
th, td { height: 24px; padding: 0 6px; border: 0 solid #191b1d; border-width: 0 1px 1px 0; text-align: right; font-weight: 400; white-space: nowrap; vertical-align: middle; line-height: 10px; }
th { height: 20px; font-weight: 500; color: #dcdcdc; }
th:first-child, td:first-child { text-align: left; padding-left: 5px; }
.groups th { height: 21px; border-top-width: 1px; text-align: center; }
th u { text-underline-offset: 1px; text-decoration-color: #888; }
th svg { display: inline-block; width: 3px; height: 6px; margin-left: 3px; vertical-align: -1px; stroke: none; fill: #6b6d6f; }
th svg.sorted { fill: #3f7fdc; }
td { color: #cfcfcf; }
td a { color: var(--link); font-weight: 500; }
.up { color: #3a9a40; }
.down { color: #b43c36; }
.muted { color: #6c6e70; }
.help { display: inline-block; width: 8px; height: 8px; color: #b8b8b8; margin-right: 2px; vertical-align: -2px; }
.name { display: flex; align-items: center; color: #b8babc; }
.name span { width: 5px; margin: 0 3px 0 6px; }
.lead { width: 5px; height: 7px; }
.coin { width: 12px; height: 12px; margin-right: 3px; }
.name a { display: block; line-height: 9px; }
.name small { display: block; font-size: 5px; line-height: 7px; color: #7c7e80; }
.w113 { width: 113px; } .w85 { width: 85px; } .w67 { width: 67px; } .w59 { width: 59px; }
.w56 { width: 56px; } .w52 { width: 52px; } .w47 { width: 47px; }
```
FILE: chart.js
```js
// Total value locked, sampled from late 2017 on: [time, level] pairs in thirds of a chart unit.
const early = "81,390 400,390 654,389 769,388 794,385 809,381 826,373 844,370 856,371 869,370 884,367 899,365 909,361 914,349 919,350 924,343 927,346 930,336 934,316 939,306 944,296 948,309 954,301 959,289 964,283 968,291 972,276 976,241 980,251 984,211 988,231 992,171 998,151 1003,159 1007,231 1010,245 1014,221 1019,211 1024,206 1028,226 1031,241 1036,231 1040,216 1046,226 1050,231 1054,216 1058,206 1062,176 1068,166";
const late = "0,156 5,121 10,146 13,136 17,163 22,156 26,136 30,121 35,96 40,71 44,83 49,41 52,35 56,66 60,41 64,61 67,37 71,71 75,56 79,86 83,43 87,71 91,61 95,91 99,71 102,86 105,131 109,136 113,101 117,96 121,111 124,126 128,111 132,126 137,116 141,111 146,86 152,69 156,91 160,96 165,91 170,106 175,111 178,181 181,229 185,236 190,229 196,239 200,246 203,281 206,289 212,283 220,284 226,273 232,271 238,269 244,264 250,271 256,276 262,281 270,289 280,287 292,286 303,283 307,304 315,309 328,308 338,313 347,313 353,305 360,299 368,297 374,291 380,293 387,293 391,304 396,295 404,293 410,291 416,286 421,295 430,293 437,298 445,297 456,307 464,301 475,301 484,303 492,307 503,312 510,316 518,313 525,315 533,313 540,317 547,315 552,305 560,299 568,298 576,296 582,289 590,287 598,283 602,279 610,284 618,281 624,261 630,249 636,246 640,231 645,203 650,229 655,209 660,221 665,206 670,231 676,221 684,223 692,221 695,193 703,188 708,199 716,206 722,223 728,221 733,206 738,206 744,211 748,241 754,226 760,231 768,243 775,233 783,219 790,233 797,223 804,226 810,223 814,193 820,179 827,159 832,136 836,143 841,127 845,159 849,156 855,139 860,159 864,143 869,153 873,173 880,171 885,176 890,193 896,209 901,216 907,196 914,209 920,221 926,206 932,196 938,196 941,163 946,171 951,161 956,171 962,161 967,176 971,186 976,173 981,156 986,126 990,111 994,121 999,126 1003,96 1006,76 1010,96 1014,76 1018,91 1023,86 1028,66 1033,81 1037,91 1041,71 1045,46 1048,91 1050,71";

const parse = (text, shift) => text.split(" ").map(pair => {
  const [x, y] = pair.split(",").map(Number);
  return [(x + shift) / 3, y / 3];
});
const points = [...parse(early, 0), ...parse(late, 1074)];
const join = list => list.map(([x, y]) => x.toFixed(1) + " " + y.toFixed(1)).join("L");
const first = points[0][0];
const last = points[points.length - 1][0];

document.getElementById("tvl-line").setAttribute("d", "M" + join(points));
document.getElementById("tvl-area").setAttribute("d", `M${first} 130L${join(points)}L${last} 130Z`);

// The range strip below repeats the series over its own width.
const mini = points.map(([x, y]) => [7 + (x - first) * 702 / (last - first), 164 - (130 - y) / 11]);
document.getElementById("tvl-mini").setAttribute("d", `M7 164L${join(mini)}L709 164Z`);
```
